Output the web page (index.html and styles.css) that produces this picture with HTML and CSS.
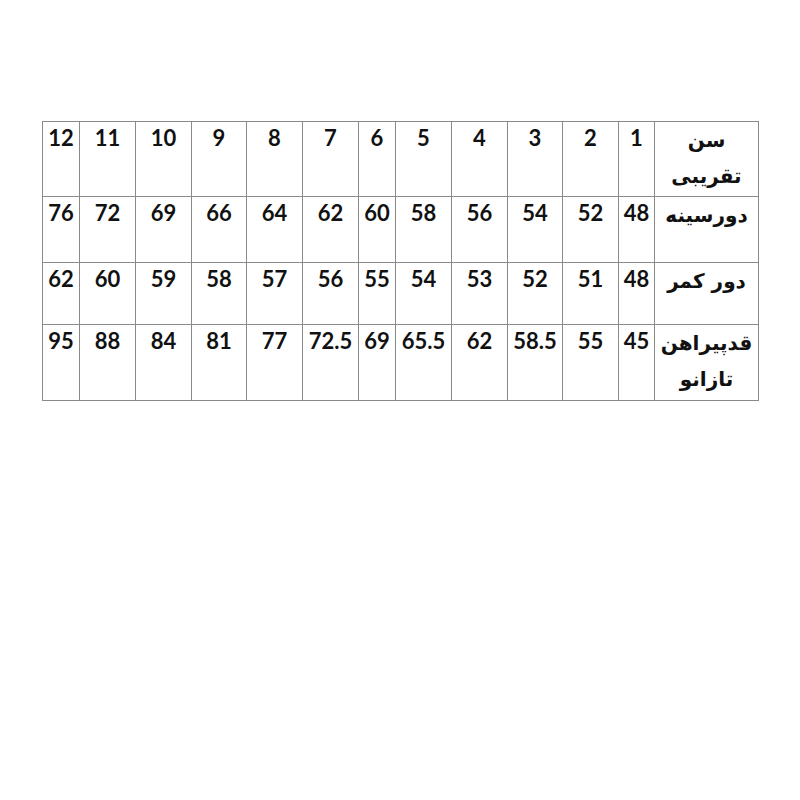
FILE: index.html
```html
<!DOCTYPE html>
<html lang="fa">
<head>
<meta charset="utf-8">
<title>جدول سایز</title>
<link rel="stylesheet" href="styles.css">
</head>
<body>
<table class="sizes" dir="rtl">
  <colgroup>
    <col class="c-label">
    <col class="c-36">
    <col class="c-56">
    <col class="c-55">
    <col class="c-56">
    <col class="c-56">
    <col class="c-37">
    <col class="c-56">
    <col class="c-56">
    <col class="c-55">
    <col class="c-56">
    <col class="c-56">
    <col class="c-37">
  </colgroup>
  <tr class="r1">
    <th class="label">سن<br>تقریبی</th>
    <td>1</td><td>2</td><td>3</td><td>4</td><td>5</td><td>6</td><td>7</td><td>8</td><td>9</td><td>10</td><td>11</td><td>12</td>
  </tr>
  <tr class="r2">
    <th class="label">دورسینه</th>
    <td>48</td><td>52</td><td>54</td><td>56</td><td>58</td><td>60</td><td>62</td><td>64</td><td>66</td><td>69</td><td>72</td><td>76</td>
  </tr>
  <tr class="r3">
    <th class="label">دور کمر</th>
    <td>48</td><td>51</td><td>52</td><td>53</td><td>54</td><td>55</td><td>56</td><td>57</td><td>58</td><td>59</td><td>60</td><td>62</td>
  </tr>
  <tr class="r4">
    <th class="label">قدپیراهن<br>تازانو</th>
    <td>45</td><td>55</td><td>58.5</td><td>62</td><td>65.5</td><td>69</td><td>72.5</td><td>77</td><td>81</td><td>84</td><td>88</td><td>95</td>
  </tr>
</table>
</body>
</html>
```

FILE: styles.css
```css
html, body {
  margin: 0;
  padding: 0;
  background: #ffffff;
}

body {
  padding: 121px 0 0 42px;
}

.sizes {
  border-collapse: collapse;
  table-layout: fixed;
  width: 717px;
  font-family: Lato, "Open Sans", sans-serif;
  font-weight: 700;
  color: #111111;
}

.c-label { width: 104px; }
.c-36 { width: 36px; }
.c-37 { width: 37px; }
.c-55 { width: 55px; }
.c-56 { width: 56px; }

.sizes td,
.sizes th {
  border: 1px solid #8a8a8a;
  padding: 3px 0 0 0;
  vertical-align: top;
  text-align: center;
  font-size: 22px;
  line-height: 25px;
  white-space: nowrap;
}

.sizes th.label {
  font-family: "DejaVu Sans", sans-serif;
  font-weight: 700;
  font-size: 20px;
  line-height: 36px;
  padding-top: 0;
}

.r1 td, .r1 th { height: 71px; }
.r2 td, .r2 th { height: 62px; }
.r3 td, .r3 th { height: 58px; }
.r4 td, .r4 th { height: 72px; }
```
